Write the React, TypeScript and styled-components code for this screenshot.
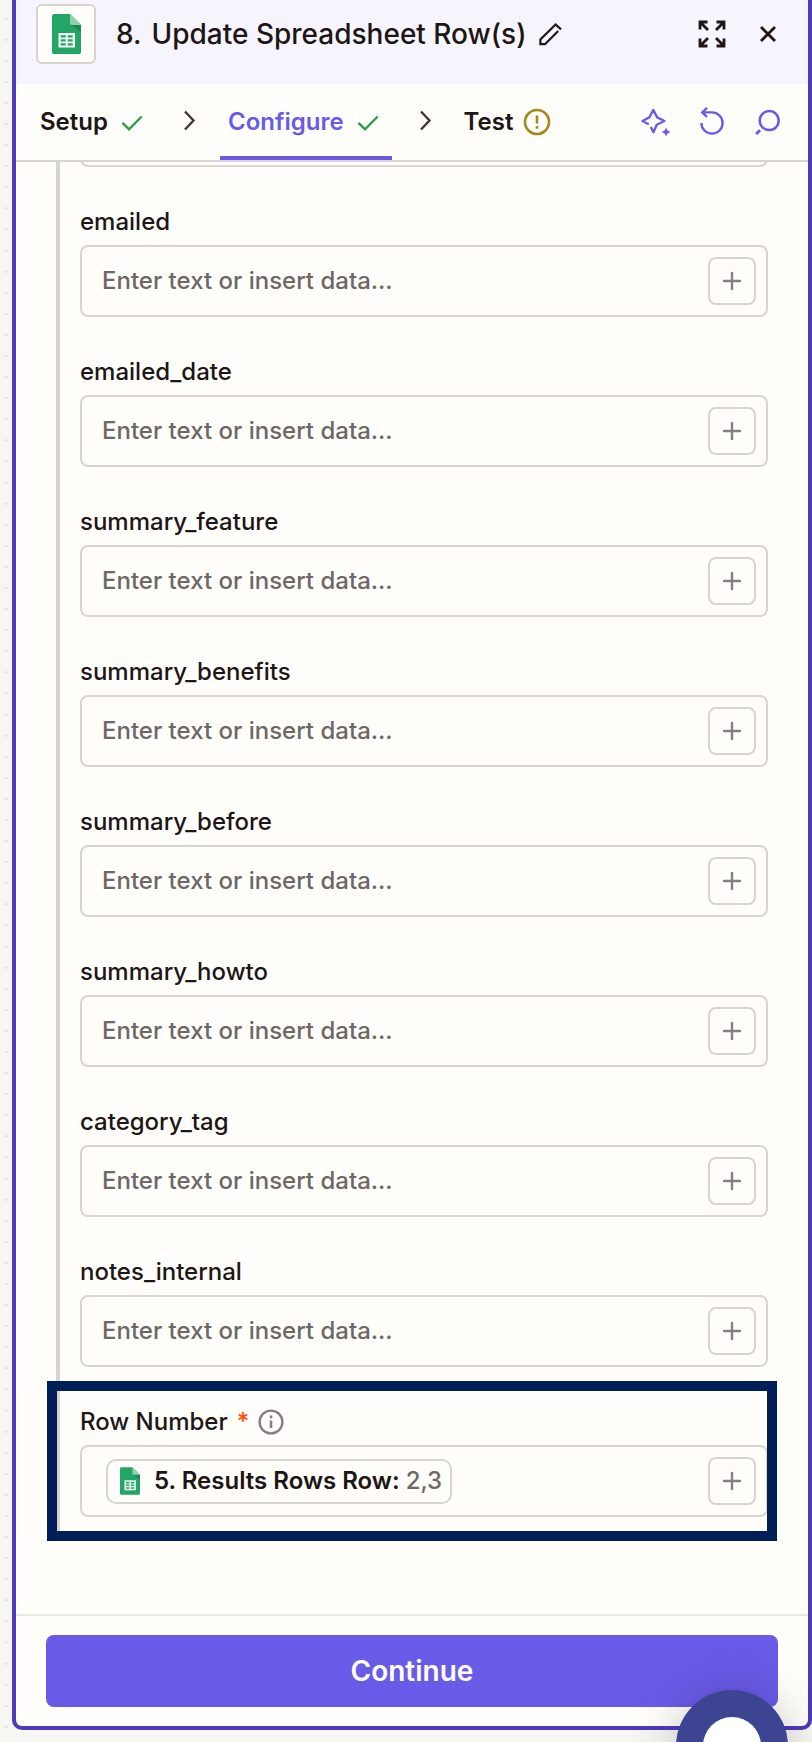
import React, { useId } from "react";
import styled, { createGlobalStyle } from "styled-components";

const color = {
  canvas: "#f7f6f3",
  dot: "#d8d7d4",
  paper: "#fffefb",
  header: "#f6f5fd",
  frame: "#4d3bb8",
  accent: "#695be8",
  ink: "#201515",
  muted: "#6d6765",
  line: "#d7d5cd",
  guide: "#d9d3ca",
  faint: "#e9e8e4",
  green: "#2f9e4c",
  amber: "#a48a1a",
  orange: "#ff4f00",
  navy: "#001e57",
};

const GlobalStyle = createGlobalStyle`
  *, *::before, *::after { box-sizing: border-box; }
  body {
    margin: 0;
    background: ${color.canvas};
    color: ${color.ink};
    font-family: Inter, "Liberation Sans", sans-serif;
    font-size: 24px;
    font-weight: 500;
    line-height: 32px;
  }
  svg { display: block; flex: none; overflow: visible; }
`;

const Canvas = styled.main`
  position: relative;
  display: flex;
  min-height: 100vh;
  padding: 0 0 12px 12px;
  overflow: hidden;
`;

const CanvasDots = styled.svg`
  position: absolute;
  inset: 0;
  width: 12px;
  height: 100%;
`;

const Panel = styled.section`
  display: flex;
  flex: 1;
  min-width: 0;
  flex-direction: column;
  border: 4px solid ${color.frame};
  border-top: 0;
  border-radius: 0 0 10px 10px;
  background: ${color.paper};
`;

const Header = styled.header`
  display: flex;
  align-items: center;
  padding: 4px 26px 20px 20px;
  background: ${color.header};
`;

const AppTile = styled.div`
  display: grid;
  place-items: center;
  width: 60px;
  height: 60px;
  margin-right: 20px;
  border: 2px solid ${color.guide};
  border-radius: 6px;
  background: ${color.paper};
`;

const Title = styled.h1`
  display: flex;
  gap: 10px;
  margin: 0 8px 0 0;
  font-size: 28px;
  font-weight: 500;
  line-height: 36px;
  white-space: nowrap;
`;

const Actions = styled.div`
  display: flex;
  gap: 28px;
  margin-left: auto;
`;

const IconButton = styled.button<{ $accent?: boolean }>`
  display: grid;
  place-items: center;
  width: 28px;
  height: 28px;
  padding: 0;
  border: 0;
  background: none;
  color: ${(p) => (p.$accent ? color.accent : color.ink)};
  cursor: pointer;
`;

const StepBar = styled.nav`
  display: flex;
  align-items: center;
  height: 78px;
  padding: 0 26px 0 16px;
  border-bottom: 2px solid ${color.line};
`;

const Step = styled.button<{ $active?: boolean }>`
  display: flex;
  align-items: center;
  align-self: stretch;
  gap: 8px;
  padding: 0 8px;
  border: 0;
  background: none;
  box-shadow: ${(p) => (p.$active ? `inset 0 -4px ${color.accent}` : "none")};
  color: ${(p) => (p.$active ? color.accent : color.ink)};
  font: inherit;
  font-weight: 600;
  cursor: pointer;
`;

const StepGap = styled.span`
  display: grid;
  place-items: center;
  width: 64px;
`;

const Form = styled.form`
  display: flex;
  flex: 1;
  flex-direction: column;
`;

const FieldGroup = styled.div`
  position: relative;
  display: flex;
  flex-direction: column;
  gap: 39px;
  margin: 0 40px 80px;
  padding: 0 0 14px 20px;
  border-left: 4px solid ${color.guide};
`;

const ScrolledField = styled.div`
  display: flex;
  align-items: flex-end;
  height: 5px;
  overflow: hidden;
`;

const FieldRow = styled.div`
  display: flex;
  flex-direction: column;
  gap: 7px;
`;

const LabelLine = styled.div`
  display: flex;
  align-items: center;
  gap: 9px;
  height: 32px;
`;

const Required = styled.span`
  color: ${color.orange};
`;

const InputBox = styled.div`
  display: flex;
  flex: 1;
  align-items: center;
  height: 72px;
  min-height: 72px;
  padding: 0 10px 0 20px;
  border: 2px solid ${color.line};
  border-radius: 8px;
  background: ${color.paper};
`;

const TextInput = styled.input`
  flex: 1;
  min-width: 0;
  height: 60px;
  padding: 0 0 2px;
  border: 0;
  outline: 0;
  background: none;
  color: ${color.ink};
  font: inherit;
  &::placeholder { color: ${color.muted}; opacity: 1; }
`;

const InsertButton = styled.button`
  display: grid;
  place-items: center;
  width: 48px;
  height: 48px;
  margin-left: auto;
  padding: 0;
  border: 2px solid ${color.line};
  border-radius: 8px;
  background: ${color.paper};
  color: #858080;
  cursor: pointer;
`;

const Pill = styled.span`
  display: flex;
  align-items: center;
  gap: 6px;
  height: 45px;
  margin-left: 4px;
  padding: 0 8px 0 12px;
  border: 2px solid ${color.line};
  border-radius: 10px;
  white-space: nowrap;
  svg { margin-right: 8px; }
`;

const PillName = styled.span`
  font-weight: 600;
`;

const PillValue = styled.span`
  color: ${color.muted};
`;

const Highlight = styled.div`
  position: absolute;
  right: -9px;
  bottom: -10px;
  left: -13px;
  height: 160px;
  border: 10px solid ${color.navy};
  pointer-events: none;
`;

const Footer = styled.footer`
  display: flex;
  margin-top: auto;
  padding: 19px 30px;
  border-top: 2px solid ${color.faint};
`;

const ContinueButton = styled.button`
  flex: 1;
  height: 72px;
  border: 0;
  border-radius: 8px;
  background: ${color.accent};
  color: ${color.paper};
  font: inherit;
  font-size: 28px;
  font-weight: 600;
  cursor: pointer;
`;

const ChatBubble = styled.button`
  position: absolute;
  right: 24px;
  bottom: -60px;
  display: grid;
  place-items: center;
  width: 112px;
  height: 112px;
  padding: 0;
  border: 0;
  border-radius: 50%;
  background: #3d4592;
  box-shadow: 0 4px 48px rgba(32, 21, 21, 0.24);
  cursor: pointer;
`;

const ChatDot = styled.span`
  width: 58px;
  height: 58px;
  border-radius: 50%;
  background: #fff;
`;

const SheetsIcon = ({ width, height }: { width: number; height: number }) => (
  <svg width={width} height={height} viewBox="0 0 29 40" aria-hidden="true">
    <path d="M2 0H18L29 11V38A2 2 0 0 1 27 40H2A2 2 0 0 1 0 38V2A2 2 0 0 1 2 0Z" fill="#23a566" />
    <path d="M18.7 10.3 29 18.5V11Z" fill="#1b8a54" />
    <path d="M18 0 29 11H20A2 2 0 0 1 18 9Z" fill="#8ed1b1" />
    <path d="M6.5 19H23V33.5H6.5Z" fill="#f4fbf7" />
    <path d="M8.7 21.2h5v2.4h-5zm7 0h5v2.4h-5zm-7 4h5v2.2h-5zm7 0h5v2.2h-5zm-7 4h5v2.2h-5zm7 0h5v2.2h-5z" fill="#23a566" />
  </svg>
);

const CheckIcon = () => (
  <svg width="32" height="28" viewBox="0 0 32 28" fill="none" stroke={color.green} strokeWidth="2.4" aria-hidden="true">
    <path d="M6.5 14.8 13 21.3 25.7 8.5" />
  </svg>
);

const ChevronIcon = () => (
  <svg width="28" height="28" viewBox="0 0 28 28" fill="none" stroke="#403735" strokeWidth="2.4" aria-hidden="true">
    <path d="M11 3.5 19.5 12.5 11 21.5" />
  </svg>
);

const WarningIcon = () => (
  <svg width="28" height="28" viewBox="0 0 28 28" fill="none" stroke={color.amber} strokeWidth="2.6" aria-hidden="true">
    <circle cx="16" cy="14" r="12" />
    <path d="M16 7.5V15.5M16 18V20.8" />
  </svg>
);

const PencilIcon = () => (
  <svg width="28" height="28" viewBox="0 0 28 28" fill="none" stroke="currentColor" strokeWidth="2.2" aria-hidden="true">
    <path d="M23.2 11 10 24.2H5.4V19.4L20.6 4.4 26 9.4" />
  </svg>
);

const ExpandIcon = () => (
  <svg width="28" height="28" viewBox="0 0 28 28" fill="none" stroke="currentColor" strokeWidth="2.8" aria-hidden="true">
    <path d="M2 9.5V2H9.5M2 2 10 10M18.5 2H26V9.5M26 2 18 10M2 18.5V26H9.5M2 26 10 18M26 18.5V26H18.5M26 26 18 18" />
  </svg>
);

const CloseIcon = () => (
  <svg width="28" height="28" viewBox="0 0 28 28" fill="none" stroke="currentColor" strokeWidth="2.8" aria-hidden="true">
    <path d="M7 7 21 21M21 7 7 21" />
  </svg>
);

const SparkleIcon = () => (
  <svg width="28" height="28" viewBox="0 0 28 28" fill="none" stroke="currentColor" strokeWidth="2.4" aria-hidden="true">
    <path d="M6.8 16.2 0.4 13 7.4 9.4 11.3 2 15.2 9.4 22.4 13 14.8 16.8 11.4 24.2 8.8 19" strokeLinejoin="round" />
    <path d="M24 19.8 25.5 22.6 28.5 24 25.5 25.4 24 28.2 22.5 25.4 19.6 24 22.5 22.6Z" fill="currentColor" stroke="none" />
  </svg>
);

const UndoIcon = () => (
  <svg width="28" height="28" viewBox="0 0 28 28" fill="none" stroke="currentColor" strokeWidth="2.4" aria-hidden="true">
    <path d="M3.4 15A10.6 10.6 0 1 0 14 4.4H4.4M9 -0.2 4.2 4.4 9 9" />
  </svg>
);

const SearchIcon = () => (
  <svg width="28" height="28" viewBox="0 0 28 28" fill="none" stroke="currentColor" strokeWidth="2.5" aria-hidden="true">
    <circle cx="15.2" cy="12.6" r="9.5" />
    <path d="M6 22.2 2.2 26" strokeWidth="3" />
  </svg>
);

const PlusIcon = () => (
  <svg width="20" height="20" viewBox="0 0 20 20" fill="none" stroke="currentColor" strokeWidth="2.4" aria-hidden="true">
    <path d="M10 2V18M2 10H18" strokeLinecap="round" />
  </svg>
);

const InfoIcon = () => (
  <svg width="26" height="26" viewBox="0 0 26 26" fill="none" stroke="#858080" strokeWidth="2.4" aria-hidden="true">
    <circle cx="13" cy="13" r="11.4" />
    <path d="M13 11.5V19M13 6.6V9.2" strokeWidth="2.6" />
  </svg>
);

const PLACEHOLDER = "Enter text or insert data...";

const fields = [
  "emailed",
  "emailed_date",
  "summary_feature",
  "summary_benefits",
  "summary_before",
  "summary_howto",
  "category_tag",
  "notes_internal",
];

const TextField = ({ name }: { name: string }) => {
  const id = useId();
  return (
    <FieldRow>
      <LabelLine>
        <label htmlFor={id}>{name}</label>
      </LabelLine>
      <InputBox>
        <TextInput id={id} type="text" placeholder={PLACEHOLDER} />
        <InsertButton type="button" aria-label={`Insert data into ${name}`}>
          <PlusIcon />
        </InsertButton>
      </InputBox>
    </FieldRow>
  );
};

export default function App() {
  return (
    <>
      <GlobalStyle />
      <Canvas>
        <CanvasDots aria-hidden="true">
          <defs>
            <pattern id="dots" width="21.09" height="21.09" patternUnits="userSpaceOnUse" y="8">
              <circle cx="6.2" cy="10.6" r="1.2" fill={color.dot} />
            </pattern>
          </defs>
          <rect width="100%" height="100%" fill="url(#dots)" />
        </CanvasDots>
        <Panel>
          <Header>
            <AppTile>
              <SheetsIcon width={29} height={40} />
            </AppTile>
            <Title>
              <span>8.</span>
              <span>Update Spreadsheet Row(s)</span>
            </Title>
            <IconButton type="button" aria-label="Rename step">
              <PencilIcon />
            </IconButton>
            <Actions>
              <IconButton type="button" aria-label="Expand">
                <ExpandIcon />
              </IconButton>
              <IconButton type="button" aria-label="Close">
                <CloseIcon />
              </IconButton>
            </Actions>
          </Header>
          <StepBar aria-label="Step progress">
            <Step type="button">
              Setup
              <CheckIcon />
            </Step>
            <StepGap>
              <ChevronIcon />
            </StepGap>
            <Step type="button" $active aria-current="step">
              Configure
              <CheckIcon />
            </Step>
            <StepGap>
              <ChevronIcon />
            </StepGap>
            <Step type="button">
              Test
              <WarningIcon />
            </Step>
            <Actions>
              <IconButton type="button" $accent aria-label="Copilot">
                <SparkleIcon />
              </IconButton>
              <IconButton type="button" $accent aria-label="Reset">
                <UndoIcon />
              </IconButton>
              <IconButton type="button" $accent aria-label="Search">
                <SearchIcon />
              </IconButton>
            </Actions>
          </StepBar>
          <Form onSubmit={(e) => e.preventDefault()}>
            <FieldGroup>
              <ScrolledField>
                <InputBox />
              </ScrolledField>
              {fields.map((name) => (
                <TextField key={name} name={name} />
              ))}
              <FieldRow>
                <LabelLine>
                  <span>Row Number</span>
                  <Required>*</Required>
                  <InfoIcon />
                </LabelLine>
                <InputBox>
                  <Pill>
                    <SheetsIcon width={20} height={28} />
                    <PillName>5. Results Rows Row:</PillName>
                    <PillValue>2,3</PillValue>
                  </Pill>
                  <InsertButton type="button" aria-label="Insert data into Row Number">
                    <PlusIcon />
                  </InsertButton>
                </InputBox>
              </FieldRow>
              <Highlight />
            </FieldGroup>
            <Footer>
              <ContinueButton type="submit">Continue</ContinueButton>
            </Footer>
          </Form>
        </Panel>
        <ChatBubble type="button" aria-label="Open chat">
          <ChatDot />
        </ChatBubble>
      </Canvas>
    </>
  );
}
